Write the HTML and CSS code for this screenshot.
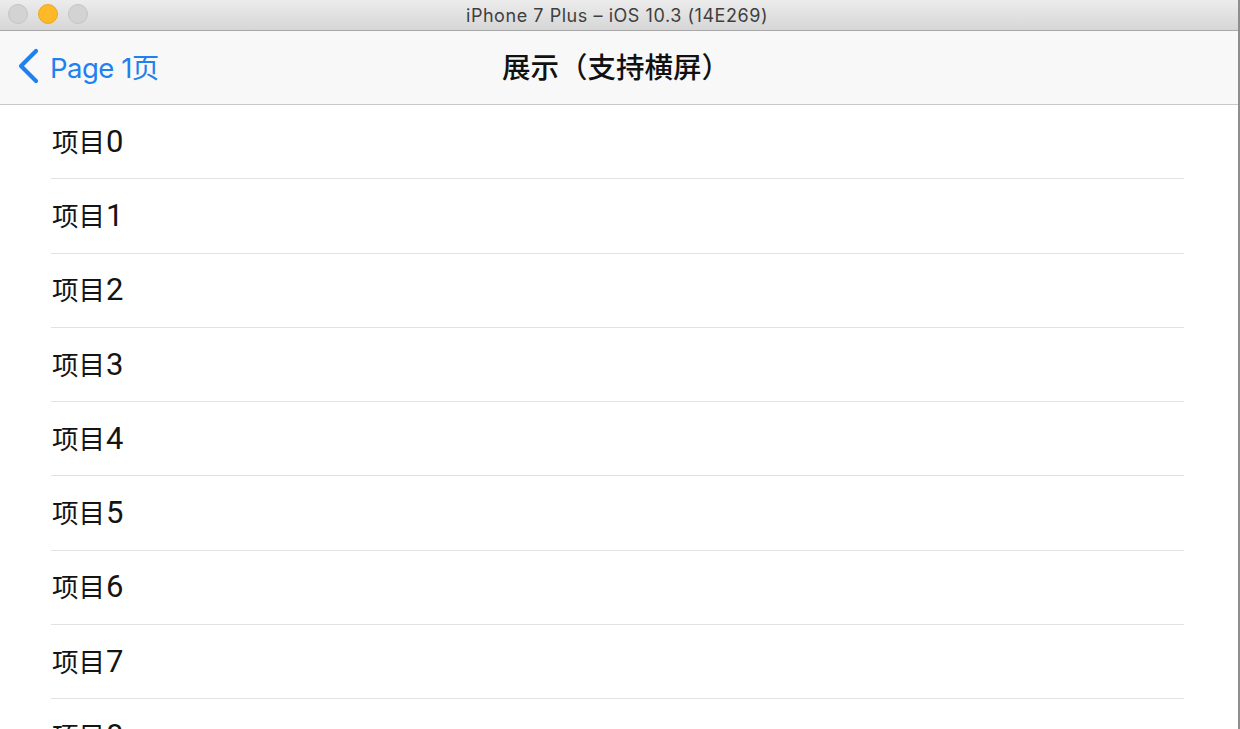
FILE: index.html
```html
<!DOCTYPE html>
<html lang="zh">
<head>
<meta charset="utf-8">
<title>展示（支持横屏）</title>
<link rel="stylesheet" href="styles.css">
</head>
<body>
<div class="window">
  <div class="titlebar">
    <div class="lights">
      <span class="light"></span>
      <span class="light light-min"></span>
      <span class="light"></span>
    </div>
    <div class="title-text">iPhone 7 Plus – iOS 10.3 (14E269)</div>
  </div>
  <div class="navbar">
    <div class="back">
      <svg class="chevron" width="26" height="36" viewBox="0 0 26 36">
        <path d="M21 3 L6 18 L21 33" fill="none" stroke="#1f80f0" stroke-width="4.2" stroke-linecap="round" stroke-linejoin="round"/>
      </svg>
      <span class="back-label">Page 1页</span>
    </div>
    <div class="nav-title">展示（支持横屏）</div>
  </div>
  <ul class="list">
    <li class="row"><span>项目<span class="num">0</span></span></li>
    <li class="row"><span>项目<span class="num">1</span></span></li>
    <li class="row"><span>项目<span class="num">2</span></span></li>
    <li class="row"><span>项目<span class="num">3</span></span></li>
    <li class="row"><span>项目<span class="num">4</span></span></li>
    <li class="row"><span>项目<span class="num">5</span></span></li>
    <li class="row"><span>项目<span class="num">6</span></span></li>
    <li class="row"><span>项目<span class="num">7</span></span></li>
    <li class="row"><span>项目<span class="num">8</span></span></li>
  </ul>
</div>
</body>
</html>
```
FILE: styles.css
```css
html, body {
  margin: 0;
  padding: 0;
  height: 100%;
  overflow: hidden;
  background: #ffffff;
}

.window {
  width: 1238px;
  height: 729px;
  border-right: 2px solid #8e8e8e;
  display: flex;
  flex-direction: column;
  overflow: hidden;
  background: #ffffff;
  font-family: "Inter", "Noto Sans CJK SC", sans-serif;
}

.titlebar {
  height: 30px;
  flex: 0 0 30px;
  background: linear-gradient(#ececec, #d6d6d6);
  border-bottom: 1px solid #a8a8a8;
  position: relative;
  display: flex;
  align-items: center;
  justify-content: center;
}

.lights {
  position: absolute;
  left: 8px;
  top: 4px;
  display: flex;
  gap: 10px;
}

.light {
  width: 20px;
  height: 20px;
  border-radius: 50%;
  box-sizing: border-box;
  background: #d3d3d3;
  border: 1px solid #c4c4c4;
}

.light-min {
  background: #fdb927;
  border-color: #eaa91f;
}

.title-text {
  font-family: "Inter", "Liberation Sans", sans-serif;
  font-size: 18px;
  color: #3f3f3f;
  letter-spacing: 0.55px;
  padding-top: 1px;
  margin-left: -4px;
}

.navbar {
  height: 73px;
  flex: 0 0 73px;
  background: #f8f8f8;
  border-bottom: 1px solid #c9c9c9;
  position: relative;
  display: flex;
  align-items: center;
  justify-content: center;
}

.back {
  position: absolute;
  left: 15px;
  top: 0;
  height: 73px;
  display: flex;
  align-items: center;
  gap: 9px;
  color: #1f80f0;
}

.chevron {
  display: block;
  margin-top: -3px;
}

.back-label {
  font-size: 27.5px;
  letter-spacing: -0.5px;
  margin-top: -4px;
}

.nav-title {
  font-family: "Noto Sans CJK SC", sans-serif;
  font-size: 28.5px;
  font-weight: 500;
  color: #111111;
  margin-left: -6px;
  margin-top: -5px;
}

.list {
  list-style: none;
  margin: 0;
  padding: 0;
}

.row {
  height: 74.3px;
  box-sizing: border-box;
  margin-left: 51px;
  margin-right: 54px;
  border-bottom: 1px solid #e2e2e2;
  display: flex;
  align-items: center;
  font-family: "Noto Sans CJK SC", sans-serif;
  font-size: 26.5px;
  line-height: 40px;
  color: #141414;
  padding-left: 1px;
  padding-bottom: 1px;
}

.num {
  font-family: "Roboto", "Inter", sans-serif;
  font-size: 31px;
  line-height: 40px;
  margin-left: 1px;
}
```
